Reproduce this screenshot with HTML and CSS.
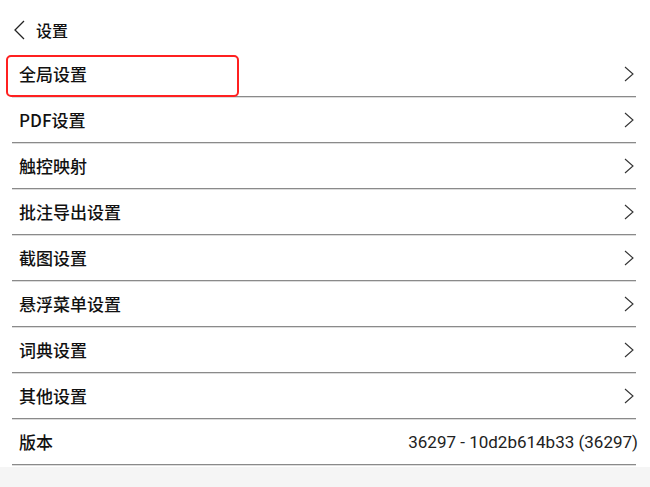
FILE: index.html
```html
<!DOCTYPE html>
<html>
<head>
  <title>设置</title>
  <link rel="stylesheet" href="styles.css">
</head>
<body>
  <div class="page">
    <div class="header">
      <svg class="back" width="14" height="20" viewBox="0 0 14 20"><path d="M11 1 L2 10 L11 19" fill="none" stroke="#222" stroke-width="1.3"/></svg>
      <span class="title">设置</span>
    </div>
    <div class="list">
      <div class="row selected"><span>全局设置</span><svg class="chev" width="10" height="16" viewBox="0 0 10 16"><path d="M1 1 L9 8 L1 15" fill="none" stroke="#333" stroke-width="1.1"/></svg></div>
      <div class="row"><span>PDF设置</span><svg class="chev" width="10" height="16" viewBox="0 0 10 16"><path d="M1 1 L9 8 L1 15" fill="none" stroke="#333" stroke-width="1.1"/></svg></div>
      <div class="row"><span>触控映射</span><svg class="chev" width="10" height="16" viewBox="0 0 10 16"><path d="M1 1 L9 8 L1 15" fill="none" stroke="#333" stroke-width="1.1"/></svg></div>
      <div class="row"><span>批注导出设置</span><svg class="chev" width="10" height="16" viewBox="0 0 10 16"><path d="M1 1 L9 8 L1 15" fill="none" stroke="#333" stroke-width="1.1"/></svg></div>
      <div class="row"><span>截图设置</span><svg class="chev" width="10" height="16" viewBox="0 0 10 16"><path d="M1 1 L9 8 L1 15" fill="none" stroke="#333" stroke-width="1.1"/></svg></div>
      <div class="row"><span>悬浮菜单设置</span><svg class="chev" width="10" height="16" viewBox="0 0 10 16"><path d="M1 1 L9 8 L1 15" fill="none" stroke="#333" stroke-width="1.1"/></svg></div>
      <div class="row"><span>词典设置</span><svg class="chev" width="10" height="16" viewBox="0 0 10 16"><path d="M1 1 L9 8 L1 15" fill="none" stroke="#333" stroke-width="1.1"/></svg></div>
      <div class="row"><span>其他设置</span><svg class="chev" width="10" height="16" viewBox="0 0 10 16"><path d="M1 1 L9 8 L1 15" fill="none" stroke="#333" stroke-width="1.1"/></svg></div>
      <div class="row"><span>版本</span><span class="version">36297 - 10d2b614b33 (36297)</span></div>
    </div>
  </div>
</body>
</html>
```

FILE: styles.css
```css
body {
  margin: 0;
  background-color: #f5f5f5;
  font-family: "Noto Sans CJK SC", "Noto Sans", sans-serif;
  color: #111;
}

.page {
  background-color: #fff;
  padding-bottom: 2px;
}

.header {
  height: 51px;
  display: flex;
  align-items: center;
  padding-left: 13px;
  gap: 9px;
  box-sizing: border-box;
  padding-top: 8px;
}

.title {
  font-size: 16px;
  font-weight: 500;
}

.list {
  margin: 0 14px 0 12px;
}

.row {
  position: relative;
  height: 46px;
  box-sizing: border-box;
  display: flex;
  align-items: center;
  justify-content: space-between;
  padding: 0 2px 0 7px;
  border-bottom: 1px solid #8a8a8a;
  box-shadow: 0 1px 0 #dcdcdc;
  font-size: 17px;
  font-weight: 500;
}

.row.selected::after {
  content: "";
  position: absolute;
  left: -6px;
  top: 4px;
  width: 233px;
  height: 42px;
  border: 2px solid #ff2020;
  border-radius: 5px;
  box-sizing: border-box;
}

.version {
  font-family: Roboto, "Liberation Sans", sans-serif;
  font-size: 17px;
  font-weight: 400;
  color: #222;
  margin-right: -4px;
}
```
